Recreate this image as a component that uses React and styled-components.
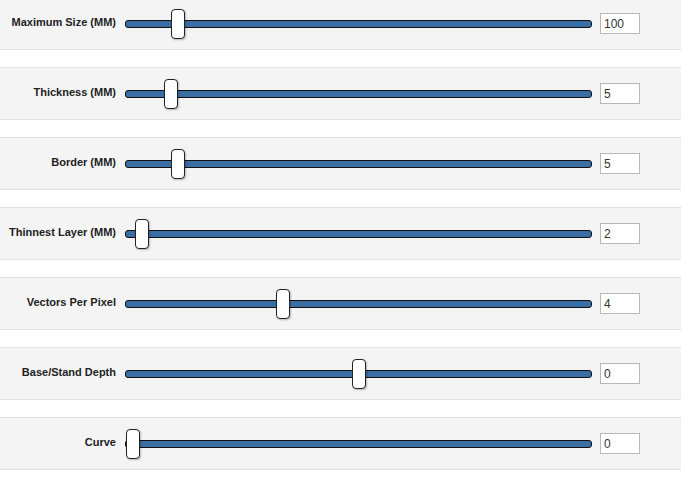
import styled, { createGlobalStyle } from "styled-components";

const settings = [
    { label: "Maximum Size (MM)", value: 100, min: 0, max: 1000 },
    { label: "Thickness (MM)", value: 5, min: 0, max: 60 },
    { label: "Border (MM)", value: 5, min: 0, max: 50 },
    { label: "Thinnest Layer (MM)", value: 2, min: 0, max: 100 },
    { label: "Vectors Per Pixel", value: 4, min: 0, max: 12 },
    { label: "Base/Stand Depth", value: 0, min: -50, max: 50 },
    { label: "Curve", value: 0, min: 0, max: 100 },
];

const Slider = ({ value, min, max }) => {
    const pct = ((value - min) / (max - min)) * 100;
    return (
        <Track>
            <Thumb style={{ left: `calc((100% - 14px) * ${pct / 100})` }} />
        </Track>
    );
};

const App = () => (
    <>
        <GlobalStyle />
        <List>
            {settings.map((s) => (
                <Row key={s.label}>
                    <Label>{s.label}</Label>
                    <Slider value={s.value} min={s.min} max={s.max} />
                    <ValueInput type="text" defaultValue={s.value} />
                </Row>
            ))}
        </List>
    </>
);

export default App;

const GlobalStyle = createGlobalStyle`
    body {
        margin: 0;
        background: #ffffff;
        font-family: "Liberation Sans", Arial, sans-serif;
        overflow: hidden;
    }
`;

const List = styled.div`
    width: 681px;
    margin-top: -3px;
    display: flex;
    flex-direction: column;
    gap: 17px;
`;

const Row = styled.div`
    height: 51px;
    background: #f4f4f4;
    border-top: 1px solid #e2e2e2;
    border-bottom: 1px solid #e2e2e2;
    display: flex;
    align-items: center;
`;

const Label = styled.div`
    width: 116px;
    flex-shrink: 0;
    margin-bottom: 2px;
    text-align: right;
    font-size: 11px;
    line-height: 13px;
    font-weight: 700;
    color: #222222;
    white-space: nowrap;
`;

const Track = styled.div`
    position: relative;
    box-sizing: border-box;
    width: 467px;
    height: 8px;
    margin-left: 9px;
    background: #3a6ea5;
    border: 1px solid #111111;
    border-radius: 3px;
`;

const Thumb = styled.div`
    position: absolute;
    top: -12px;
    box-sizing: border-box;
    width: 14px;
    height: 30px;
    background: #ffffff;
    border: 1.5px solid #222222;
    border-radius: 4px;
    box-shadow: 1px 1px 2px rgba(0, 0, 0, 0.25);
`;

const ValueInput = styled.input`
    box-sizing: border-box;
    width: 40px;
    height: 21px;
    margin-left: 8px;
    padding: 0 3px;
    border: 1px solid #b8b8b8;
    background: #ffffff;
    font-family: "Liberation Sans", Arial, sans-serif;
    font-size: 12px;
    color: #333333;
    outline: none;
`;
